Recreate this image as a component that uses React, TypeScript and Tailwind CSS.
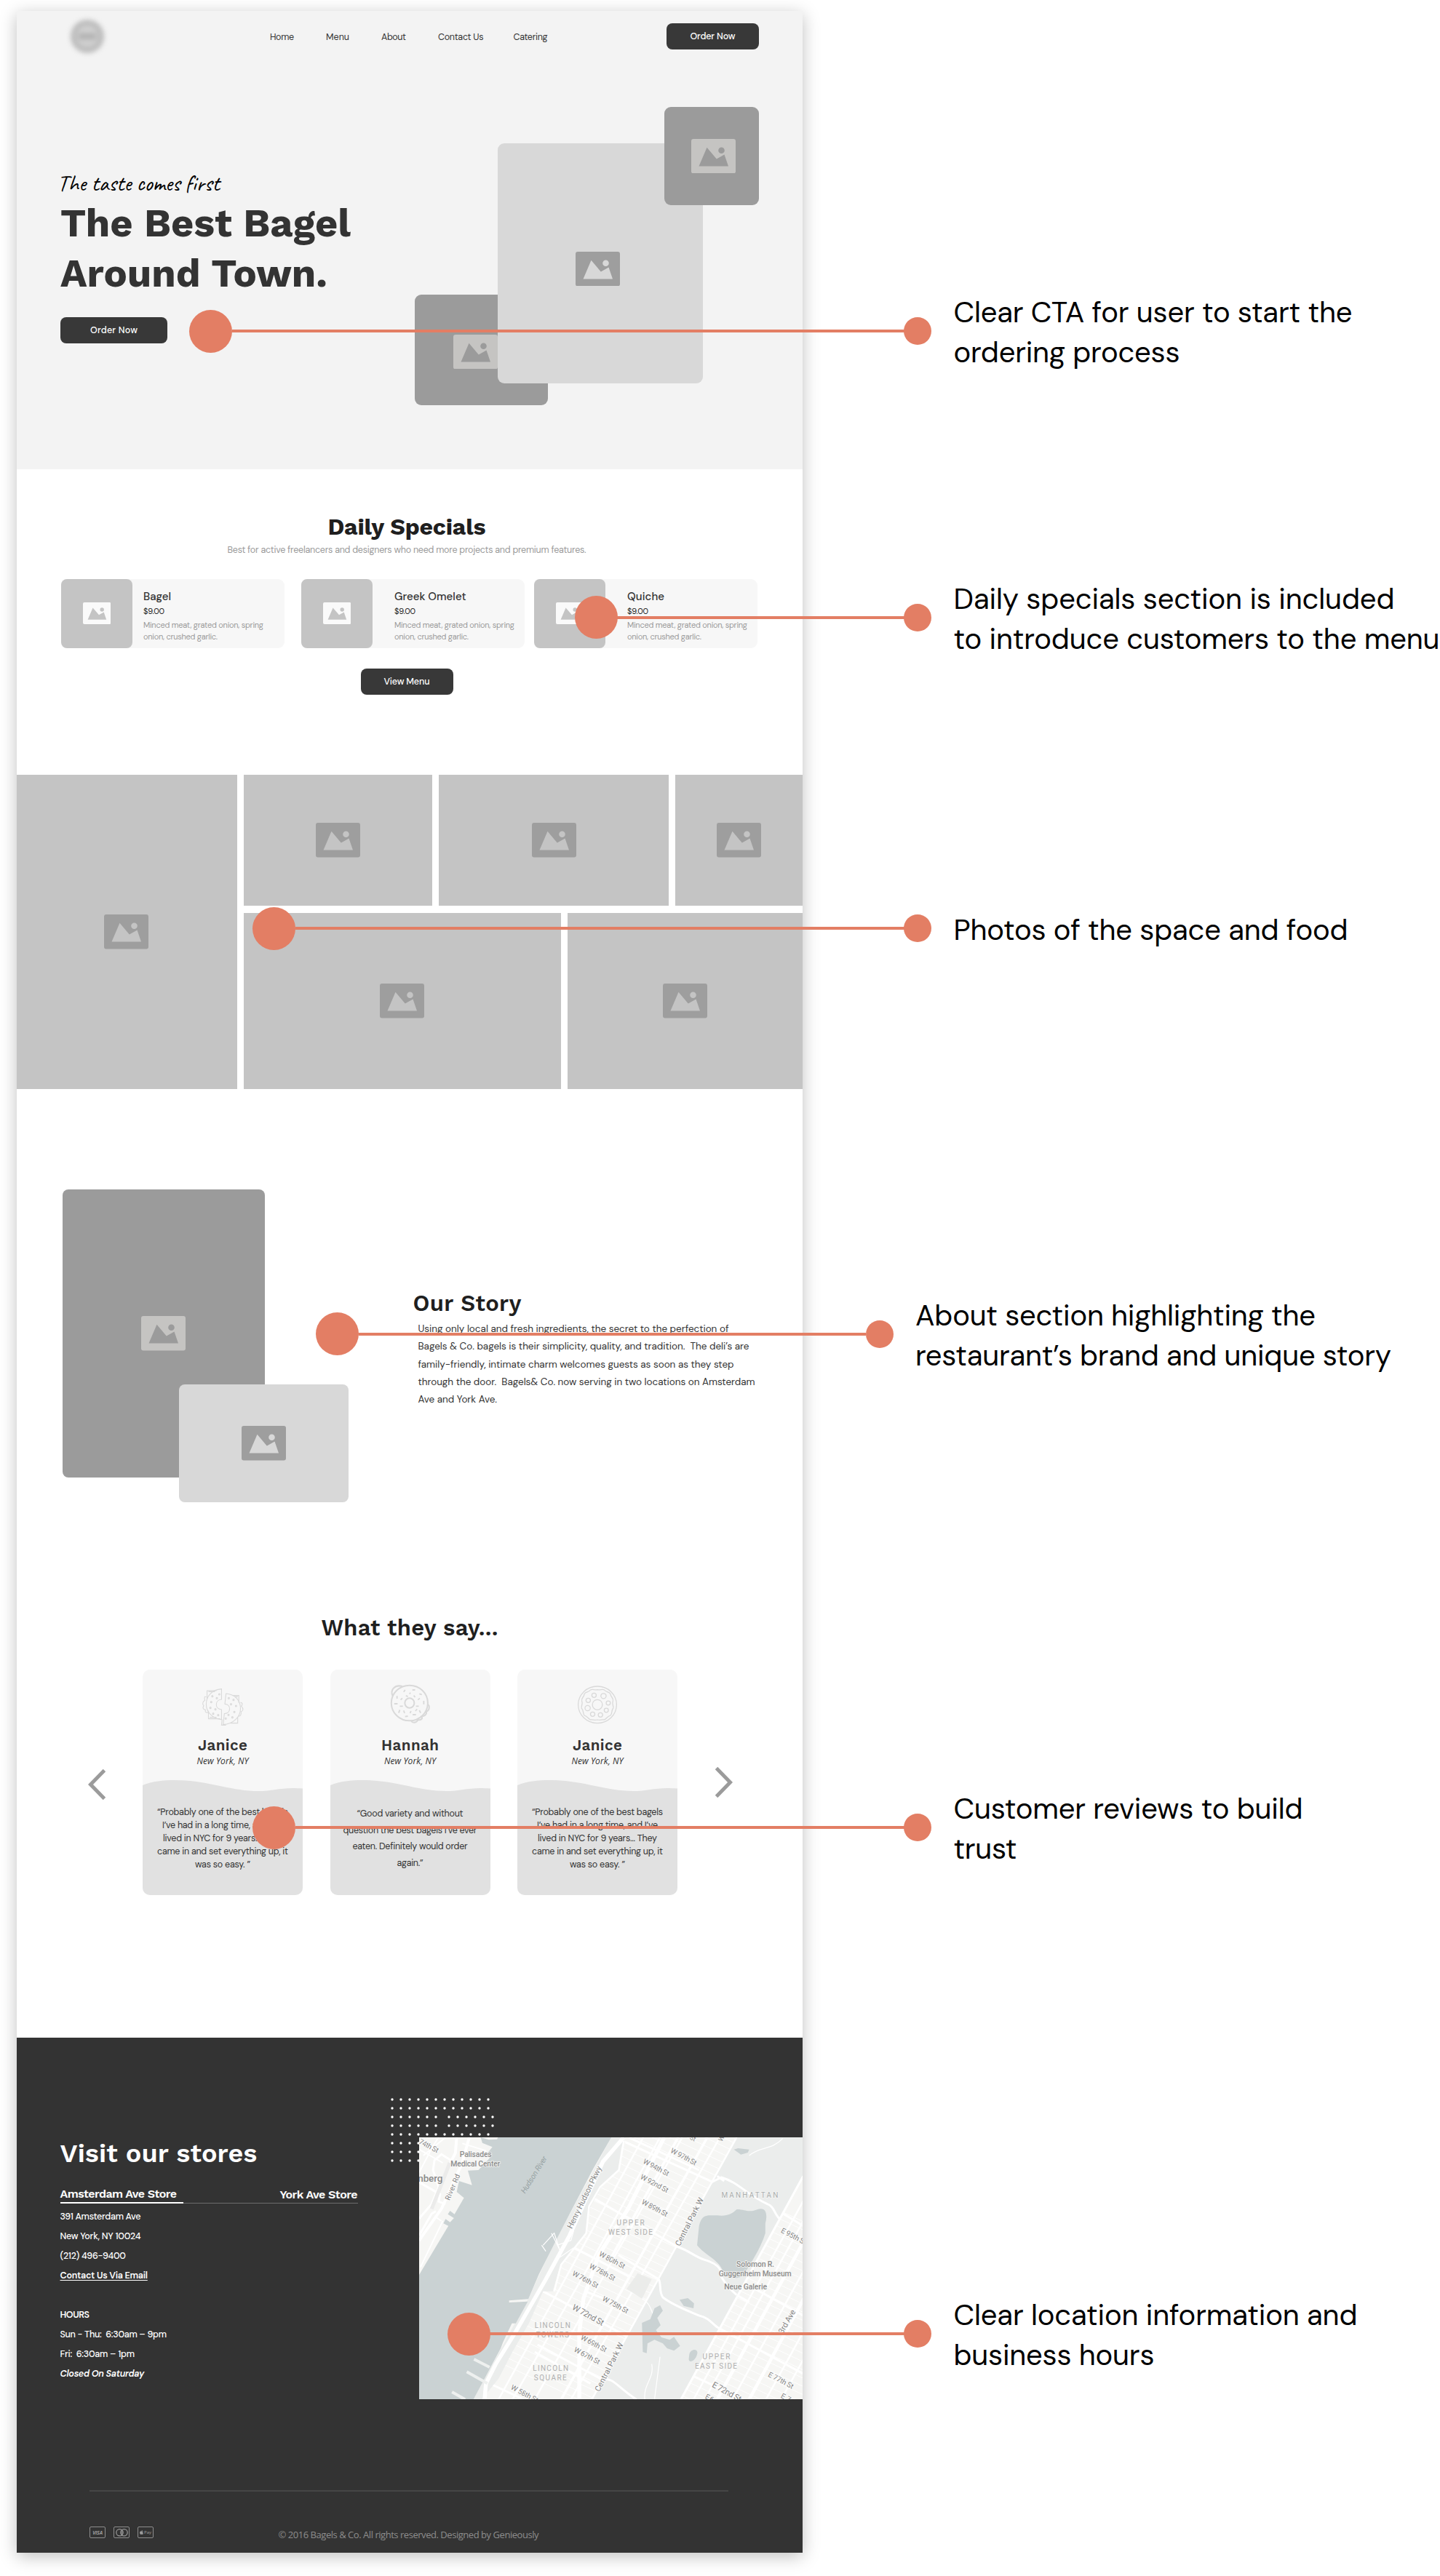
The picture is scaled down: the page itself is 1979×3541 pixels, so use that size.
import { useLayoutEffect, useRef, useState, type ReactNode } from "react";
import { clsx } from "clsx";

const BODY = "font-['DM_Sans','Lato',sans-serif]";
const HEAD = "font-['Work_Sans','Inter',sans-serif]";

/* One line of text whose tracking is set so that it spans exactly `w` pixels. */
function Line({ w, children, className }: { w: number; children: string; className?: string }) {
  const ref = useRef<HTMLSpanElement>(null);
  const [tracking, setTracking] = useState(0);
  useLayoutEffect(() => {
    const el = ref.current;
    if (!el) return;
    el.style.letterSpacing = "0px";
    const natural = el.getBoundingClientRect().width;
    setTracking((w - natural) / Math.max(1, children.length - 1));
  }, [w, children]);
  return (
    <span
      ref={ref}
      className={clsx("inline-block w-max whitespace-pre", className)}
      style={{ letterSpacing: `${tracking}px`, marginRight: `${-tracking}px` }}
    >
      {children}
    </span>
  );
}

function Picture({ className, mark = "text-[#9e9e9e]" }: { className?: string; mark?: string }) {
  return (
    <svg viewBox="0 0 61 47.5" className={clsx("h-[47.5px] w-[61px] shrink-0", mark, className)}>
      <path
        fill="currentColor"
        fillRule="evenodd"
        d="M3 0H58Q61 0 61 3V44.5Q61 47.500 58 47.500H3Q0 47.500 0 44.500V3Q0 0 3 0ZM10.500 37.500H51L45.500 21.500L34.800 27.500L21.500 11.800ZM41.500 11.500A4.300 4.300 0 1 0 41.500 20.100A4.300 4.300 0 1 0 41.500 11.500Z"
      />
    </svg>
  );
}

function Button({ label, w, className }: { label: string; w: number; className?: string }) {
  return (
    <button
      className={clsx(
        "flex h-9 items-center justify-center rounded-[8px] bg-[#383838] text-[12.5px] font-medium leading-4 text-white",
        BODY,
        className,
      )}
    >
      <Line w={w}>{label}</Line>
    </button>
  );
}

function Header() {
  return (
    <header className="flex h-[69px] items-center">
      <div className="ml-[74px] flex size-[46px] items-center justify-center rounded-full border-[8px] border-[#bdbdbd] bg-[#cfcfcf] blur-[3px]">
        <div className="h-2 w-6 bg-[#b2b2b2]" />
      </div>
      <nav className={clsx("ml-[228px] mt-[3px] flex text-[12.5px] leading-4 text-[#333]", BODY)}>
        <a className="mr-11"><Line w={33}>Home</Line></a>
        <a className="mr-[44px]"><Line w={32}>Menu</Line></a>
        <a className="mr-[44px]"><Line w={34}>About</Line></a>
        <a className="mr-[41px]"><Line w={62.5}>Contact Us</Line></a>
        <a><Line w={47}>Catering</Line></a>
      </nav>
      <Button label="Order Now" w={62} className="ml-auto mr-[60px] w-[127px]" />
    </header>
  );
}

function Hero() {
  return (
    <section className="h-[630px] bg-[#f3f3f3]">
      <Header />
      <div className="flex justify-between pl-[60px] pr-[60px]">
        <div className="pt-[153px]">
          <p className="ml-[-4px] h-[30px] font-['Caveat','Lato',cursive] text-[31px] leading-[30px] text-black">
            <Line w={220}>The taste comes first</Line>
          </p>
          <h1 className={clsx("mt-[5px] flex flex-col items-start text-[54px] font-bold leading-[69px] text-[#333]", HEAD)}>
            <Line w={399}>The Best Bagel</Line>
            <Line w={367}>Around Town.</Line>
          </h1>
          <Button label="Order Now" w={65} className="mt-[26px] w-[147px]" />
        </div>
        <div className="relative mt-[63px] h-[410px] w-[473px]">
          <div className="absolute bottom-0 left-0 flex h-[152px] w-[183px] items-center justify-center rounded-[9px] bg-[#9b9b9b]">
            <Picture mark="text-[#c5c4c2]" className="mr-4 mt-[5px]" />
          </div>
          <div className="absolute left-[114px] top-[49.500px] flex h-[330px] w-[282px] items-center justify-center rounded-[9px] bg-[#d8d8d8]">
            <Picture className="mr-[7px] mt-4" />
          </div>
          <div className="absolute right-0 top-0 flex h-[135px] w-[130px] items-center justify-center rounded-[9px] bg-[#9b9b9b]">
            <Picture mark="text-[#c5c4c2]" className="ml-1" />
          </div>
        </div>
      </div>
    </section>
  );
}

const dishes = [
  { name: "Bagel", w: 38, text: "ml-[15px]", card: "mr-[23px]" },
  { name: "Greek Omelet", w: 98.5, text: "ml-[30px]", card: "mr-[13px]" },
  { name: "Quiche", w: 51, text: "ml-[30px]", card: "" },
];

function Specials() {
  return (
    <section className="flex h-[420px] w-[1072px] flex-col items-center pt-[62px]">
      <h2 className={clsx("text-[32px] font-bold leading-[34px] text-[#1f1f1f]", HEAD)}>
        <Line w={217}>Daily Specials</Line>
      </h2>
      <p className={clsx("mt-[6px] text-[12.5px] leading-[18px] text-[#9b9b9b]", BODY)}>
        <Line w={493}>Best for active freelancers and designers who need more projects and premium features.</Line>
      </p>
      <div className="mt-[31px] flex self-start pl-[61px]">
        {dishes.map((d) => (
          <article key={d.name} className={clsx("flex h-[94.500px] w-[307px] rounded-[9px] bg-[#f7f7f7]", d.card)}>
            <div className="flex w-[98px] items-center justify-center rounded-[8px] bg-[#c4c4c4]">
              <Picture mark="text-[#fafafa]" className="h-[30px]! w-[38.500px]!" />
            </div>
            <div className={clsx("flex flex-col items-start pt-[15px]", d.text, BODY)}>
              <h3 className="text-[15px] font-medium leading-[18px] text-[#333]"><Line w={d.w}>{d.name}</Line></h3>
              <p className="mt-1 text-[11px] leading-[14px] text-[#222]"><Line w={29}>$9.00</Line></p>
              <p className="mt-[5px] flex flex-col items-start text-[11px] leading-[15.500px] text-[#9b9b9b]">
                <Line w={165}>Minced meat, grated onion, spring</Line>
                <Line w={102}>onion, crushed garlic.</Line>
              </p>
            </div>
          </article>
        ))}
      </div>
      <Button label="View Menu" w={63} className="mt-[28.500px] w-[127px]" />
    </section>
  );
}

function Tile({ className }: { className: string }) {
  return (
    <div className={clsx("flex items-center justify-center bg-[#c4c4c4]", className)}>
      <Picture />
    </div>
  );
}

function Gallery() {
  return (
    <section className="flex h-[432px] gap-[8.500px]">
      <Tile className="w-[303px] shrink-0 pr-[2px]" />
      <div className="flex flex-1 flex-col gap-[9.500px]">
        <div className="flex h-[180px] gap-[9px]">
          <Tile className="w-[259.500px]" />
          <Tile className="w-[316px]" />
          <Tile className="flex-1" />
        </div>
        <div className="flex flex-1 gap-[9px]">
          <Tile className="w-[436.500px]" />
          <Tile className="flex-1" />
        </div>
      </div>
    </section>
  );
}

function Story() {
  return (
    <section className="flex h-[703px] pl-[62.500px] pt-[138px]">
      <div className="relative h-[430px] w-[393.500px]">
        <div className="flex h-[396px] w-[278px] items-center justify-center rounded-[8px] bg-[#9b9b9b]">
          <Picture mark="text-[#c5c4c2]" />
        </div>
        <div className="absolute bottom-0 right-0 flex h-[162px] w-[233px] items-center justify-center rounded-[8px] bg-[#d8d8d8]">
          <Picture />
        </div>
      </div>
      <div className="ml-[88.500px] mt-[140px]">
        <h2 className={clsx("text-[31px] font-semibold leading-[34px] text-[#1f1f1f]", HEAD)}>
          <Line w={149}>Our Story</Line>
        </h2>
        <div className={clsx("ml-[7px] mt-[6px] flex flex-col items-start text-[13.5px] leading-[24.250px] text-[#333]", BODY)}>
          <Line w={427}>Using only local and fresh ingredients, the secret to the perfection of</Line>
          <Line w={455}>Bagels &amp; Co. bagels is their simplicity, quality, and tradition.  The deli’s are</Line>
          <Line w={434}>family-friendly, intimate charm welcomes guests as soon as they step</Line>
          <Line w={463}>through the door.  Bagels&amp; Co. now serving in two locations on Amsterdam</Line>
          <Line w={108.5}>Ave and York Ave.</Line>
        </div>
      </div>
    </section>
  );
}

const donutSvg = "h-14 w-[60px] overflow-visible fill-none stroke-[#d9d9d9] [&_*]:[vector-effect:non-scaling-stroke]";

function SplitBagel() {
  const seeds = [
    [82, 87], [57, 95], [73, 103], [53, 119], [50, 143], [68, 149], [60, 167], [78, 173],
    [116, 103], [133, 110], [124, 128], [142, 135], [136, 160], [115, 172], [129, 182], [105, 187],
  ];
  return (
    <svg viewBox="15.6 45 156.8 168" preserveAspectRatio="none" className={donutSvg} strokeWidth="1.1">
      <path d="M90 65C55 68 35 95 35 128C35 162 60 188 90 191V150C65 148 65 110 90 108Z" />
      <path d="M38 105V72H72M43 76H66M43 155V188H85M47 182H72M35 98C25 92 30 108 30 112C22 118 20 128 26 134C20 145 26 150 32 151C30 163 36 163 42 162" />
      <path d="M106 84C138 87 158 112 158 146C158 180 132 210 96 212L100 167C124 166 126 129 102 127Z" />
      <path d="M132 92H152V122M137 97H148M148 182V206H122M158 120C168 122 164 132 161 136C170 146 168 156 160 158C162 170 158 178 151 177M92 190L90 214H106" />
      {seeds.map(([x, y]) => (
        <ellipse key={`${x}-${y}`} cx={x} cy={y} rx="2.600" ry="3" />
      ))}
    </svg>
  );
}

function SprinkleBagel() {
  const dashes =
    "M743 77L748 69M774 69H784M764 86L767 80M751 92L758 97M799 85L808 88M719 94V105M738 103L732 110M779 92L784 99M794 110L801 103M815 114V128M709 126H721M729 136H740M787 136H797M729 151L725 164M743 154L746 165M769 156L766 165M791 148L785 156M799 153L804 164M748 179L758 177M775 171H787";
  return (
    <svg viewBox="688.6 45 156.8 168" preserveAspectRatio="none" className={donutSvg} strokeWidth="2">
      <ellipse cx="764" cy="123" rx="65.500" ry="73" />
      <ellipse cx="764" cy="123" rx="17" ry="20" />
      <path strokeWidth="1.800" d={dashes} />
      <path d="M738 54C712 46 692 68 704 95M828 128C838 132 836 156 824 157C828 170 816 178 808 178C812 190 804 194 794 192C790 206 774 206 770 197" />
    </svg>
  );
}

function HoleBagel() {
  const holes = [
    [1427, 91, 8], [1461, 94, 9.5], [1406, 112, 8], [1478, 123, 7.5], [1404, 144, 9.5], [1471, 153, 7.5], [1422, 169, 8], [1450, 172, 8],
  ];
  return (
    <svg viewBox="1360.6 45 156.8 168" preserveAspectRatio="none" className={donutSvg} strokeWidth="1.3">
      <ellipse cx="1439" cy="130" rx="69" ry="76" />
      <ellipse cx="1439" cy="130" rx="18" ry="21" />
      <path d="M1439 68C1452 70 1456 64 1464 69C1470 80 1482 76 1486 86C1486 98 1498 102 1495 114C1490 128 1498 134 1496 144C1488 154 1494 164 1486 174C1474 178 1472 188 1464 192C1452 190 1450 196 1439 192C1428 196 1424 190 1414 192C1406 188 1404 178 1392 174C1386 164 1390 154 1382 144C1380 134 1388 128 1383 114C1380 102 1392 98 1392 86C1396 76 1408 80 1414 69C1422 64 1426 70 1439 68Z" />
      {holes.map(([x, y, r]) => (
        <ellipse key={`${x}-${y}`} cx={x} cy={y} rx={r} ry={r * 1.12} />
      ))}
    </svg>
  );
}

const probably: [string, number][] = [
  ["“Probably one of the best bagels", 180],
  ["I’ve had in a long time, and I’ve", 166],
  ["lived in NYC for 9 years... They", 164],
  ["came in and set everything up, it", 180],
  ["was so easy. ”", 76],
];

const reviews: { name: string; w: number; icon: ReactNode; leading: string; quote: [string, number][] }[] = [
  { name: "Janice", w: 68, icon: <SplitBagel />, leading: "leading-[18px]", quote: probably },
  {
    name: "Hannah",
    w: 79,
    icon: <SprinkleBagel />,
    leading: "leading-[22.500px]",
    quote: [
      ["“Good variety and without", 146],
      ["question the best bagels I’ve ever", 184],
      ["eaten. Definitely would order", 158],
      ["again.”", 36],
    ],
  },
  { name: "Janice", w: 68, icon: <HoleBagel />, leading: "leading-[18px]", quote: probably },
];

function Reviews() {
  return (
    <section className="flex h-[601px] flex-col pt-[21px]">
      <h2 className={clsx("self-center text-[31px] font-semibold leading-[34px] text-[#1f1f1f]", HEAD)}>
        <Line w={243}>What they say...</Line>
      </h2>
      <div className="mt-[40px] flex h-[310px] pl-[98px]">
        <svg viewBox="0 0 24 42" className="mt-[137px] h-[42px] w-6 fill-none stroke-[#9b9b9b]" strokeWidth="5">
          <path d="M22.500 1.500L3.500 21L22.500 40.500" />
        </svg>
        <div className="ml-[51px] flex gap-[37.500px]">
          {reviews.map((r, i) => (
            <article key={i} className="flex w-[220px] flex-col items-center overflow-hidden rounded-[10px] bg-[#f7f7f7]">
              <div className="mt-5 h-14">{r.icon}</div>
              <h3 className={clsx("mt-4 text-[20.5px] font-semibold leading-6 text-[#333]", HEAD)}><Line w={r.w}>{r.name}</Line></h3>
              <p className="mt-[2px] font-['Open_Sans'] text-[12px] italic leading-4 text-[#333]"><Line w={71}>New York, NY</Line></p>
              <svg viewBox="0 0 220 16" className="mt-[18px] h-4 w-[220px] shrink-0 fill-[#e1e1e1]">
                <path d="M0 7C14 1.500 28 0 44 0C90 0 120 15 159 15C182 15 190 9 220 11.500V16H0Z" />
              </svg>
              <div className={clsx("flex w-full flex-1 flex-col items-center bg-[#e1e1e1] pt-[19px] text-[12.5px] text-[#333]", r.leading, BODY)}>
                {r.quote.map(([text, w]) => (
                  <Line key={text} w={w}>{text}</Line>
                ))}
              </div>
            </article>
          ))}
        </div>
        <svg viewBox="0 0 24 42" className="ml-[52px] mt-[134px] h-[42px] w-6 fill-none stroke-[#9b9b9b]" strokeWidth="5">
          <path d="M1.500 1.500L20.500 21L1.500 40.500" />
        </svg>
      </div>
    </section>
  );
}

const SX = 527.5 / 1378;
const SY = 1 / 3;
const mx = (x: number) => (x - 145) * SX;
const my = (y: number) => (y - 295) * SY;

/* text, centre x, centre y, rotation, length, size */
const streets: [string, number, number, number, number, number][] = [
  ["W 97th St", 1095, 375, 28, 39, 10],
  ["W 94th St", 996, 419, 28, 39, 10],
  ["W 92nd St", 990, 485, 28, 42, 10],
  ["W 89th St", 991, 586, 28, 39, 10],
  ["W 80th St", 838, 801, 28, 39, 10],
  ["W 78th St", 803, 851, 28, 39, 10],
  ["W 76th St", 742, 881, 28, 39, 10],
  ["W 75th St", 850, 985, 28, 39, 10],
  ["W 72nd St", 752, 1027, 29, 48, 11.5],
  ["W 69th St", 772, 1145, 28, 39, 10],
  ["W 67th St", 748, 1195, 28, 39, 10],
  ["W 58th St", 524, 1352, 28, 41, 10],
  ["E 95th St", 1490, 703, 28, 38, 10],
  ["E 77th St", 1444, 1297, 28, 38, 10],
  ["E 72nd St", 1250, 1344, 29, 44, 11.5],
  ["E 7", 1462, 1368, 28, 14, 10],
  ["E 6", 1188, 1370, 28, 12, 10],
  ["74th St", 180, 330, 28, 29, 10],
  ["River Rd", 265, 500, -67, 38, 10],
  ["Henry Hudson Pkwy", 738, 542, -64, 94, 11],
  ["Central Park W", 1115, 643, -63, 73, 11],
  ["Central Park W", 827, 1242, -63, 74, 11],
  ["3rd Ave", 1465, 1055, -60, 36, 11],
  ["St", 1128, 298, 28, 8, 9],
  ["W", 1230, 299, -62, 6, 9],
];

const places: [string, number, number, number, number, string, string][] = [
  ["Palisades", 348, 364, 44, 10.5, "#8c8c8c", "500"],
  ["Medical Center", 347, 403, 68, 10.5, "#8c8c8c", "500"],
  ["nberg", 185, 465, 34, 13.5, "#8a8a8a", "500"],
  ["MANHATTAN", 1332, 535, 78, 10, "#a9adad", "400"],
  ["UPPER", 904, 649, 38, 10, "#b0b0b0", "400"],
  ["WEST SIDE", 904, 688, 61, 10, "#b0b0b0", "400"],
  ["Solomon R.", 1352, 817, 52, 10.5, "#8c8c8c", "500"],
  ["Guggenheim Museum", 1351, 856, 100, 10.5, "#8c8c8c", "500"],
  ["Neue Galerie", 1317, 910, 59, 10.5, "#8c8c8c", "500"],
  ["LINCOLN", 624, 1072, 49, 10, "#b0b0b0", "400"],
  ["TOWERS", 624, 1111, 45, 10, "#b0b0b0", "400"],
  ["LINCOLN", 617, 1248, 49, 10, "#b0b0b0", "400"],
  ["SQUARE", 616, 1288, 45, 10, "#b0b0b0", "400"],
  ["UPPER", 1212, 1200, 38, 10, "#b0b0b0", "400"],
  ["EAST SIDE", 1211, 1239, 58, 10, "#b0b0b0", "400"],
];

function CityMap() {
  const westStreets = Array.from({ length: 42 }, (_, i) => 20 + i * 34);
  const eastStreets = Array.from({ length: 42 }, (_, i) => -40 + i * 34);
  return (
    <svg viewBox="0 0 527.5 360.300" className="relative block h-[360.300px] w-[527.500px] bg-[#f6f6f4] font-['Roboto',sans-serif]">
      <defs>
        <clipPath id="west">
          <path d="M885 295H1285L765 1376H370L430 1290L480 1180L540 1060L590 930H625L650 830L740 700L760 580L800 500L860 430Z" />
        </clipPath>
        <clipPath id="east">
          <path d="M1524 455V1376H1085Z" />
        </clipPath>
        <clipPath id="jersey">
          <path d="M145 295H368L408 335L400 375L322 430L290 475L283 520L306 545L145 862Z" />
        </clipPath>
      </defs>
      <g transform={`scale(${SX} ${SY}) translate(-145 -295)`} className="fill-none stroke-white [&_path]:[vector-effect:non-scaling-stroke]">
        <path className="fill-[#ebedec] stroke-none" d="M1285 295H1524V455L1085 1376H765Z" />
        <path className="fill-[#ebedec] stroke-none" d="M835 295H885L870 340L860 430L800 500L760 580L740 700L650 830L625 930H590L540 1060L480 1180L430 1290L370 1376H340L535 965L630 730Z" />
        <path
          className="fill-[#cad2d3] stroke-none"
          d="M145 862L250 660L232 650L240 632L256 645L270 628L248 612L256 598L272 612L306 545L280 520L288 475L335 492L320 432L358 430L400 378L382 372L408 335L372 318L366 295L395 305L425 303L428 295H835L770 425L690 600L632 730L575 860L537 962L468 968V976L535 972L492 1062H478L446 1140L438 1165L410 1225L380 1290L340 1376H145Z"
        />
        <g clipPath="url(#jersey)" strokeWidth="1">
          <path strokeWidth="4" d="M280 295L275 360L240 440M325 295L300 400L225 590L145 720" />
          <path strokeWidth="3" d="M145 630L190 570L215 500L195 430L200 390L225 365L260 390M145 480L220 530L215 560L240 570M205 600L190 610L145 700" />
          <path strokeWidth="2" d="M160 370L240 295M145 440L195 330L215 295M145 345L230 400M300 320L385 350M230 640L150 830M200 620L225 640" />
          <path className="stroke-[#ebebea]" strokeWidth="5" d="M255 400L235 460L190 590" />
        </g>
        <g clipPath="url(#west)">
          {westStreets.map((y) => (
            <path key={y} strokeWidth="0.9" d={`M380 ${y - 220}L1320 ${y + 288}`} />
          ))}
          <path strokeWidth="2.500" d="M950 295L430 1376M1010 295L760 815L480 1376M1090 295L840 800L560 1376M1225 295L690 1376" />
          <path strokeWidth="3.500" d="M1075 295L830 800M1180 295L1040 580L895 880L655 1376" />
          <path strokeWidth="3" d="M885 315L1200 480M770 545L1070 745M660 725L900 870M860 780L1005 880M590 930L890 1115M570 1150L860 1330M380 1300L520 1376M740 930L900 1000M900 297L1150 430M560 1180L760 1310" />
          <path strokeWidth="5.500" d="M1025 295L895 590L790 780L735 960L720 1100V1376" />
        </g>
        <path strokeWidth="2.500" d="M1285 295L765 1376M880 310L862 430L795 500L755 580L745 690L655 820L630 930" />
        <path strokeWidth="5.500" d="M880 295L805 395L740 560L685 700L600 880L490 1100L420 1230L385 1310L380 1376" />
        <path strokeWidth="1.200" d="M590 740L630 690L650 760L620 690M600 765L585 740M640 740L690 720L700 680M650 790L700 750" />
        <path className="stroke-[#eef0ef]" strokeWidth="4" d="M342 1210L398 1243M316 1262L390 1310M263 1345L310 1376" />
        <path strokeWidth="3" d="M1195 480L1230 460C1290 480 1320 530 1395 570C1420 580 1420 610 1438 630M1215 455L1240 475M1070 745C1120 765 1130 785 1170 800C1230 820 1230 850 1230 870C1245 900 1260 920 1285 945M1005 880C1015 900 1005 930 1020 955C1060 990 1110 1010 1150 1030C1190 1040 1200 1070 1222 1082M800 1290C850 1290 850 1320 925 1376" />
        <path strokeWidth="1.200" d="M945 960C980 980 975 1020 1000 1050M980 1230C990 1290 950 1310 955 1376M1010 1200L990 1376M1330 370C1370 330 1410 350 1450 300" />
        <path className="fill-[#cad2d3] stroke-none" d="M1150 660C1160 610 1180 618 1215 617C1250 622 1270 610 1285 592C1320 592 1330 608 1360 592C1395 580 1395 620 1388 650V690C1370 760 1330 820 1310 865C1290 880 1250 880 1235 845C1220 800 1170 780 1143 740Z" />
        <path className="fill-[#cad2d3] stroke-none" d="M1010 987L1020 1010L1000 1040L1012 1070L995 1090L1015 1120L1045 1130L1060 1118L1082 1155L1060 1175L1035 1165L1020 1145L990 1130L965 1145L962 1185L948 1180L945 1060L975 1045L990 1000ZM1080 965L1110 958L1132 980L1130 1000L1095 990ZM1115 1190C1120 1165 1150 1165 1143 1190C1138 1215 1115 1230 1113 1210ZM1275 345L1290 340L1330 345L1325 358L1300 366Z" />
        <path className="fill-[#ebecea] stroke-none" d="M930 855L980 880L945 960L890 920Z" />
        <g clipPath="url(#east)">
          {eastStreets.map((y) => (
            <path key={y} strokeWidth="0.9" d={`M1000 ${y + 400}L1560 ${y + 702}`} />
          ))}
          <path strokeWidth="2.500" d="M1600 400L1130 1376M1640 400L1170 1376M1740 400L1270 1376M1860 400L1390 1376M1915 400L1445 1376" />
          <path strokeWidth="4.500" d="M1680 400L1215 1376M1790 400L1330 1376" />
          <path strokeWidth="3" d="M1438 600L1524 660M1320 900L1524 1030M1222 1082L1524 1270M1130 1280L1310 1376M1285 945L1330 975" />
        </g>
        <path strokeWidth="3" d="M1524 455L1085 1376" />
      </g>
      <g fill="#858585" stroke="#fbfbfa" strokeWidth="2" className="[paint-order:stroke]" textAnchor="middle">
        {streets.map(([t, x, y, a, len, size], i) => (
          <text key={i} fontSize={size} textLength={len} transform={`translate(${mx(x)} ${my(y)}) rotate(${a})`} dy="0.350em">
            {t}
          </text>
        ))}
        <text fontSize="10.500" textLength="58" fill="#98a3a4" stroke="none" fontStyle="italic" transform={`translate(${mx(557)} ${my(449)}) rotate(-58)`} dy="0.350em">
          Hudson River
        </text>
      </g>
      <g textAnchor="middle" stroke="#f6f6f4" strokeWidth="1.500" className="[paint-order:stroke]">
        {places.map(([t, x, y, len, size, fill, weight], i) => (
          <text key={i} x={mx(x)} y={my(y)} dy="0.350em" fontSize={size} textLength={len} fill={fill} fontWeight={weight}>
            {t}
          </text>
        ))}
      </g>
    </svg>
  );
}

function DotGrid() {
  const dots: [number, number][] = [];
  for (let row = 0; row < 8; row++)
    for (let col = 0; col < 12; col++) dots.push([2 + col * 12 + ((row === 2 || row === 3) && col > 5 ? 6 : 0), 2 + row * 12]);
  return (
    <svg viewBox="0 0 144 90" className="absolute left-[-39px] top-[-54px] h-[90px] w-36 fill-white">
      {dots.map(([x, y]) => (
        <circle key={`${x}-${y}`} cx={x} cy={y} r="1.700" />
      ))}
    </svg>
  );
}

function PayCard({ children }: { children: ReactNode }) {
  return (
    <span className="flex h-[16px] w-[22px] items-center justify-center rounded-[2px] border-[1.500px] border-[#8d8d8d] font-['Open_Sans'] leading-none text-[#9b9b9b]">
      {children}
    </span>
  );
}

function Footer() {
  return (
    <footer className="flex h-[708px] flex-col bg-[#333] text-white">
      <div className="flex h-[622px] justify-between">
        <div className="pl-[59.500px] pt-[138.500px]">
          <h2 className={clsx("text-[36px] font-semibold leading-10", HEAD)}><Line w={271}>Visit our stores</Line></h2>
          <div className={clsx("mt-[26px] flex h-[23px] w-[409px] justify-between border-b border-[#6c6c6c] text-[16px] font-semibold leading-5", HEAD)}>
            <span className="h-[23px] w-[169px] border-b-[2px] border-white"><Line w={160.5}>Amsterdam Ave Store</Line></span>
            <span className="pt-px"><Line w={107}>York Ave Store</Line></span>
          </div>
          <address className={clsx("mt-[5px] flex flex-col items-start text-[12.5px] font-medium not-italic leading-[27px]", BODY)}>
            <Line w={111}>391 Amsterdam Ave</Line>
            <Line w={111}>New York, NY 10024</Line>
            <Line w={90.5}>(212) 496-9400</Line>
            <Line w={120.5} className="font-semibold underline decoration-1 underline-offset-2">Contact Us Via Email</Line>
            <Line w={40.5} className="mt-[27px] font-semibold">HOURS</Line>
            <Line w={146.5}>Sun - Thu:  6:30am – 9pm</Line>
            <Line w={102.5}>Fri:  6:30am – 1pm</Line>
            <Line w={116} className="font-semibold italic">Closed On Saturday</Line>
          </address>
        </div>
        <div className="relative mt-[137px]">
          <DotGrid />
          <CityMap />
        </div>
      </div>
      <div className="ml-[100px] flex w-[878px] items-start border-t-2 border-[#464646] pt-[48px]">
        <PayCard><span className="text-[7px] font-bold italic tracking-[-0.2px]">VISA</span></PayCard>
        <span className="ml-[11px]">
          <PayCard>
            <svg viewBox="0 0 19 12.500" className="h-[12.500px] w-[19px] fill-none stroke-[#9b9b9b]" strokeWidth="1.200">
              <circle cx="6.500" cy="6.250" r="4.700" />
              <circle cx="12.500" cy="6.250" r="4.700" />
              <path d="M8.500 4.500H10.500M8.500 6.300H10.500M8.500 8.100H10.500" />
            </svg>
          </PayCard>
        </span>
        <span className="ml-[11px]">
          <PayCard>
            <svg viewBox="0 0 10 12" className="mr-px h-[6px] w-[5px] fill-[#9b9b9b]">
              <path d="M5 3.500C6 2.800 8.500 2.500 9.500 4.500C7.500 6 8 8.500 10 9C9 11.500 7.500 12.500 6 11.700C5.300 11.400 4.700 11.400 4 11.700C2 12.500 0 9.500 0 7C0 3.500 3 2.500 5 3.500ZM5 3C4.800 1.500 6 0 7.500 0C7.500 1.800 6.500 3 5 3Z" />
            </svg>
            <span className="text-[6px]">Pay</span>
          </PayCard>
        </span>
        <p className="ml-[171.500px] mt-[2px] font-['Open_Sans'] text-[13px] leading-[18px] text-[#8d8d8d]">
          <Line w={358}>© 2016 Bagels &amp; Co. All rights reserved. Designed by Genieously</Line>
        </p>
      </div>
    </footer>
  );
}

const notes: { at: string; reach: string; lines: [string, number][] }[] = [
  { at: "left-[260px] top-[425.500px]", reach: "w-[924px]", lines: [["Clear CTA for user to start the", 548], ["ordering process", 311]] },
  { at: "left-[789.500px] top-[819px]", reach: "w-[394.500px]", lines: [["Daily specials section is included", 606], ["to introduce customers to the menu", 668]] },
  { at: "left-[347px] top-[1246.500px]", reach: "w-[837px]", lines: [["Photos of the space and food", 542]] },
  { at: "left-[434px] top-[1804px]", reach: "w-[697.500px]", lines: [["About section highlighting the", 550], ["restaurant’s brand and unique story", 654]] },
  { at: "left-[347px] top-[2482.500px]", reach: "w-[837px]", lines: [["Customer reviews to build", 480], ["trust", 87]] },
  { at: "left-[614.500px] top-[3178.500px]", reach: "w-[569.500px]", lines: [["Clear location information and", 555], ["business hours", 276]] },
];

function Note({ at, reach, lines }: (typeof notes)[number]) {
  return (
    <div className={clsx("absolute flex h-[59px] items-center", at)}>
      <span className="size-[59px] shrink-0 rounded-full bg-[#e37e64]" />
      <span className={clsx("mx-[-0.500px] h-1 shrink-0 bg-[#e37e64]", reach)} />
      <span className="size-[38px] shrink-0 rounded-full bg-[#e37e64]" />
      <p className={clsx("ml-[30.500px] mt-[4px] flex flex-col items-start text-[40px] leading-[55px] text-black", BODY)}>
        {lines.map(([text, w]) => (
          <Line key={text} w={w}>{text}</Line>
        ))}
      </p>
    </div>
  );
}

export default function App() {
  return (
    <div className="relative h-[3541px] w-[1979px] overflow-hidden bg-white">
      <div className="ml-[23px] pt-[15px]">
        <main className="w-[1080px] bg-white shadow-[0_5px_22px_rgba(0,0,0,0.25)]">
          <Hero />
          <Specials />
          <Gallery />
          <Story />
          <Reviews />
          <Footer />
        </main>
      </div>
      {notes.map((n) => (
        <Note key={n.at} {...n} />
      ))}
    </div>
  );
}
